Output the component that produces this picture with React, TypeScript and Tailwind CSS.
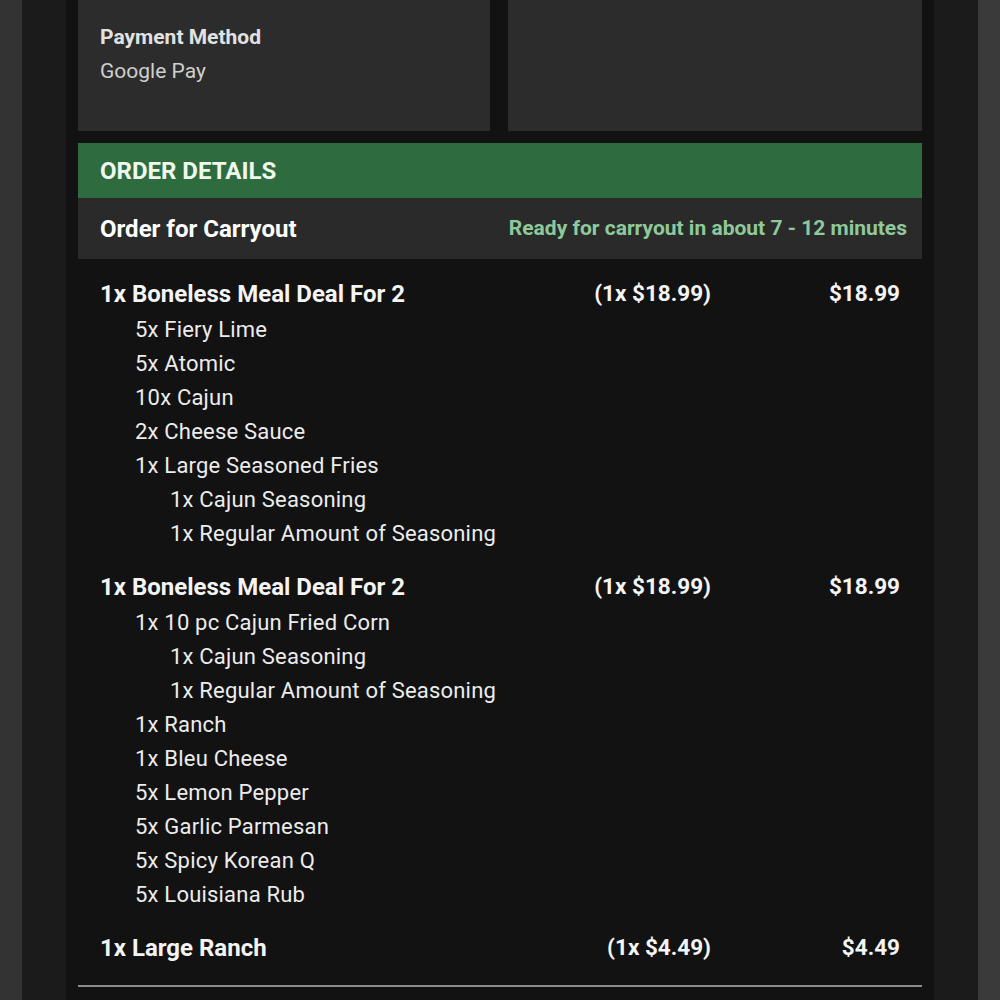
type Line = { text: string; level: 1 | 2 };

interface OrderItem {
  name: string;
  unit: string;
  total: string;
  lines: Line[];
}

const items: OrderItem[] = [
  {
    name: '1x Boneless Meal Deal For 2',
    unit: '(1x $18.99)',
    total: '$18.99',
    lines: [
      { text: '5x Fiery Lime', level: 1 },
      { text: '5x Atomic', level: 1 },
      { text: '10x Cajun', level: 1 },
      { text: '2x Cheese Sauce', level: 1 },
      { text: '1x Large Seasoned Fries', level: 1 },
      { text: '1x Cajun Seasoning', level: 2 },
      { text: '1x Regular Amount of Seasoning', level: 2 },
    ],
  },
  {
    name: '1x Boneless Meal Deal For 2',
    unit: '(1x $18.99)',
    total: '$18.99',
    lines: [
      { text: '1x 10 pc Cajun Fried Corn', level: 1 },
      { text: '1x Cajun Seasoning', level: 2 },
      { text: '1x Regular Amount of Seasoning', level: 2 },
      { text: '1x Ranch', level: 1 },
      { text: '1x Bleu Cheese', level: 1 },
      { text: '5x Lemon Pepper', level: 1 },
      { text: '5x Garlic Parmesan', level: 1 },
      { text: '5x Spicy Korean Q', level: 1 },
      { text: '5x Louisiana Rub', level: 1 },
    ],
  },
  {
    name: '1x Large Ranch',
    unit: '(1x $4.49)',
    total: '$4.49',
    lines: [],
  },
];

function ItemBlock({ item }: { item: OrderItem }) {
  return (
    <div className="flex flex-col">
      <div className="flex h-[34px] items-center font-bold text-[#f4f4f4]">
        <span className="flex-1 text-[24px]">{item.name}</span>
        <span className="w-[200px] text-right text-[22.5px]">{item.unit}</span>
        <span className="w-[189px] text-right text-[22.5px]">{item.total}</span>
      </div>
      {item.lines.map((line, i) => (
        <div
          key={i}
          className={`flex h-[34px] items-center pt-[2px] text-[22px] tracking-[0.2px] text-[#ececec] ${
            line.level === 1 ? 'pl-[35px]' : 'pl-[70px]'
          }`}
        >
          {line.text}
        </div>
      ))}
    </div>
  );
}

export default function App() {
  return (
    <div
      className="flex h-[1000px] w-[1000px] overflow-hidden bg-[#333333]"
      style={{ fontFamily: 'Roboto, "Noto Sans", sans-serif' }}
    >
      <div className="ml-[22px] flex w-[956px] justify-center bg-[#1b1b1b]">
        <div className="flex w-[868px] flex-col bg-[#121212] px-3">
          <div className="flex gap-[18px]">
            <div className="flex h-[131px] w-[412px] flex-col bg-[#2c2c2c] px-[22px] pt-[23px]">
              <span className="text-[21px] leading-[28px] font-bold text-[#e2e2e2]">
                Payment Method
              </span>
              <span className="mt-[6px] text-[21px] leading-[28px] text-[#cfcfcf]">
                Google Pay
              </span>
            </div>
            <div className="h-[131px] w-[414px] bg-[#2c2c2c]" />
          </div>

          <div className="mt-3 flex h-[55px] items-center bg-[#2e6b3f] px-[22px]">
            <span className="text-[24px] font-bold text-[#eef8ee]">ORDER DETAILS</span>
          </div>
          <div className="flex h-[61px] items-center justify-between bg-[#2a2a2a] pl-[22px] pr-[15px]">
            <span className="text-[24px] font-bold text-white">Order for Carryout</span>
            <span className="text-[21px] font-bold text-[#8ec99b]">
              Ready for carryout in about 7 - 12 minutes
            </span>
          </div>

          <div className="flex flex-col gap-[21px] pt-[18px] pl-[22px] pr-[22px]">
            {items.map((item, i) => (
              <ItemBlock key={i} item={item} />
            ))}
          </div>
          <div className="mt-5 h-[2px] bg-[#8a8a8a]" />
        </div>
      </div>
      <div className="flex-1 bg-[#3a3a3a]" />
    </div>
  );
}
